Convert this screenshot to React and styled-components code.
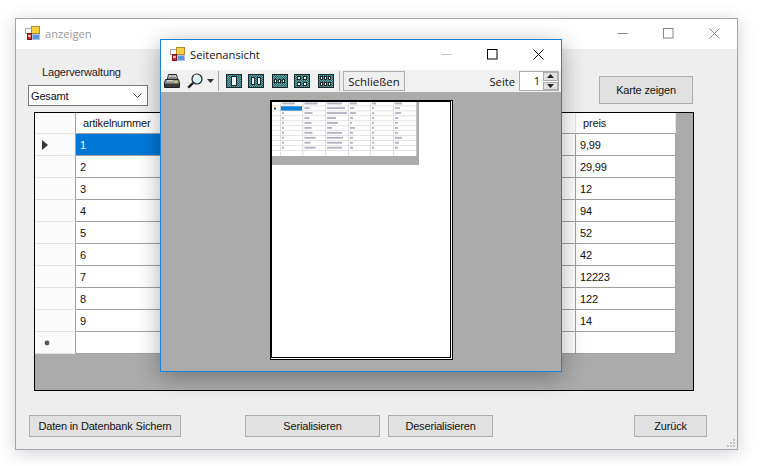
import React from "react";
import styled, { createGlobalStyle } from "styled-components";

const Global = createGlobalStyle`
  html, body { margin: 0; padding: 0; background: #fff; }
  body { font-family: "Liberation Sans", Arial, sans-serif; font-size: 11px; letter-spacing: -0.17px; color: #111; }
`;

const Desktop = styled.div`
  position: relative;
  width: 766px;
  height: 466px;
  overflow: hidden;
  background: #fff;
`;

const MainWindow = styled.div`
  position: absolute;
  left: 15px;
  top: 18px;
  width: 723px;
  height: 432px;
  box-sizing: border-box;
  border: 1px solid #a6a6a6;
  background: #eeeeee;
  box-shadow: 0 3px 16px rgba(40, 40, 70, 0.22);
  display: flex;
  flex-direction: column;
`;

const TitleBar = styled.div`
  height: 30px;
  box-sizing: border-box;
  padding: 0 0 2px 9px;
  flex: none;
  background: #fff;
  display: flex;
  align-items: center;
  font-family: "Open Sans", sans-serif;
  font-size: 11.2px;
  letter-spacing: 0;
  color: ${p => p.$active ? "#111" : "#9a9a9a"};
`;

const TitleText = styled.span`
  flex: 1;
  padding-left: 4px;
`;

const WinButton = styled.div`
  width: 46px;
  height: 100%;
  display: flex;
  align-items: center;
  justify-content: center;
`;

const TopRow = styled.div`
  display: flex;
  justify-content: space-between;
  align-items: flex-end;
  padding: 16px 44px 0 12px;
`;

const Field = styled.div`
  display: flex;
  flex-direction: column;
`;

const FieldLabel = styled.label`
  margin: 0 0 6px 14px;
  line-height: 14px;
  color: #222;
`;

const Select = styled.div`
  width: 120px;
  height: 21px;
  box-sizing: border-box;
  border: 1px solid #7a7a7a;
  background: #fff;
  display: flex;
  align-items: center;
  justify-content: space-between;
  padding: 0 5px 0 2px;
`;

const PushButton = styled.button`
  box-sizing: border-box;
  width: ${p => p.$w}px;
  height: ${p => p.$h || 22}px;
  margin: 0 0 ${p => p.$mb || 0}px ${p => p.$ml || 0}px;
  padding: 0;
  flex: none;
  white-space: nowrap;
  border: 1px solid #adadad;
  background: #e1e1e1;
  color: #111;
  font-family: "Liberation Sans", Arial, sans-serif;
  font-size: 11px;
  letter-spacing: -0.17px;
`;

const Grid = styled.div`
  margin: 6px 43px 0 18px;
  height: 279px;
  box-sizing: border-box;
  border: 1px solid #000;
  background: #ababab;
  display: flex;
  flex-direction: column;
`;

const GridRow = styled.div`
  display: grid;
  grid-template-columns: 41px repeat(6, 100px);
  height: ${p => p.$h}px;
`;

const RowHeader = styled.div`
  box-sizing: border-box;
  background: #fbfbfb;
  border-right: 1px solid #a0a0a0;
  border-bottom: 1px solid #e2e2e2;
  display: flex;
  align-items: center;
  padding-left: ${p => p.$indent || 0}px;
`;

const ColumnHeader = styled.div`
  box-sizing: border-box;
  background: #fff;
  border-right: 1px solid #e4e4e4;
  border-bottom: 1px solid #a0a0a0;
  padding-left: 7px;
  display: flex;
  align-items: center;
`;

const Cell = styled.div`
  box-sizing: border-box;
  background: ${p => p.$sel ? "#0078d7" : "#fff"};
  color: ${p => p.$sel ? "#fff" : "#111"};
  border-right: 1px solid #a0a0a0;
  border-bottom: 1px solid #a0a0a0;
  padding-left: 4px;
  display: flex;
  align-items: center;
`;

const Footer = styled.div`
  display: flex;
  padding-left: 13px;
  margin-top: 24px;
`;

const Grip = styled.svg`
  position: absolute;
  right: 1px;
  bottom: 1px;
`;

const Dialog = styled.div`
  position: absolute;
  left: 160px;
  top: 39px;
  width: 402px;
  height: 333px;
  box-sizing: border-box;
  border: 1px solid #1883d7;
  background: #ababab;
  box-shadow: 0 5px 22px rgba(0, 0, 0, 0.32);
  display: flex;
  flex-direction: column;
`;

const Toolbar = styled.div`
  height: 22px;
  flex: none;
  background: #f0f0f0;
  display: flex;
  align-items: center;
  padding-left: 3px;
`;

const ToolIcon = styled.svg`
  flex: none;
  margin-left: ${p => p.$ml || 0}px;
  display: block;
`;

const Sep = styled.div`
  width: 1px;
  height: 20px;
  flex: none;
  background: #a8a8a8;
  margin-left: ${p => p.$ml}px;
`;

const CloseButton = styled.button`
  box-sizing: border-box;
  width: 62px;
  height: 20px;
  margin-left: 3px;
  padding: 0;
  flex: none;
  border: 1px solid #adadad;
  background: #efefef;
  color: #111;
  font-family: "Open Sans", sans-serif;
  font-size: 11.4px;
`;

const PageLabel = styled.span`
  margin-left: auto;
  font-family: "Open Sans", sans-serif;
  font-size: 11.2px;
  letter-spacing: 0;
  color: #111;
`;

const Spin = styled.div`
  width: 40px;
  height: 20px;
  box-sizing: border-box;
  margin: 0 2px 0 4px;
  border: 1px solid #adadad;
  background: #fff;
  display: flex;
  justify-content: flex-end;
  align-items: stretch;
  font-family: "Open Sans", sans-serif;
  font-size: 11.2px;
`;

const SpinValue = styled.span`
  flex: 1;
  text-align: right;
  line-height: 18px;
  padding-right: 3px;
`;

const SpinArrows = styled.div`
  width: 15px;
  display: flex;
  flex-direction: column;
  gap: 1px;
  background: #fff;
`;

const SpinArrow = styled.div`
  flex: 1;
  background: #e1e1e1;
  border: 1px solid #adadad;
  box-sizing: border-box;
  display: flex;
  align-items: center;
  justify-content: center;
`;

const Preview = styled.div`
  flex: 1;
  display: flex;
  justify-content: center;
  padding-top: 8px;
  box-sizing: border-box;
`;

const Page = styled.div`
  width: 183px;
  height: 260px;
  box-sizing: border-box;
  border: 1px solid #000;
  padding: 0 1px 1px 0;
  background: #fff;
`;

const PageInner = styled.div`
  height: 100%;
  box-sizing: border-box;
  border: 1px solid #000;
  background: #fff;
  display: flex;
`;

const Thumb = styled.svg`
  display: block;
  flex: none;
`;

const AppIcon = () => (
  <svg width="16" height="16" viewBox="0 0 16 16" style={{ flex: "none" }} shapeRendering="crispEdges">
    <rect x="0.5" y="3.5" width="6" height="5" fill="#fff" stroke="#a9a9a9" />
    <rect x="6.5" y="1.5" width="8" height="7" fill="#f6cf3c" stroke="#b98a2a" />
    <rect x="2.5" y="8.5" width="4" height="6" fill="#c8302a" stroke="#7d1712" />
    <rect x="7.5" y="9.5" width="7" height="5" fill="#5b94e0" stroke="#a9c2e6" />
    <rect x="3" y="10" width="3" height="2" fill="#f4b4a8" />
  </svg>
);

const WinIcon = ({ kind, color }) => (
  <svg width="11" height="11" viewBox="0 0 11 11" fill="none" stroke={color} strokeWidth="1">
    {kind === "min" && <path d="M0.5 5.5H10.5" />}
    {kind === "max" && <rect x="0.5" y="0.5" width="9.5" height="9.5" />}
    {kind === "close" && <path d="M0.5 0.5L10.5 10.5M10.5 0.5L0.5 10.5" />}
  </svg>
);

const Printer = () => (
  <ToolIcon width="16" height="16" viewBox="0 0 16 16">
    <path d="M4.5 1.5H12.5L13.5 6H3.5Z" fill="#eeeeee" stroke="#222" />
    <path d="M5.5 3H11.5M5 4.5H12" stroke="#888" />
    <path d="M1.5 6.5H14.5L15.5 10V14.5H0.5V10Z" fill="#9c9c9c" stroke="#222" />
    <rect x="1" y="10.5" width="14" height="3.5" fill="#3c3c3c" />
    <rect x="10" y="8" width="3" height="1.5" fill="#f0d040" />
    <path d="M3 7.6H9" stroke="#dcdcdc" />
  </ToolIcon>
);

const Magnifier = () => (
  <ToolIcon $ml={7} width="16" height="16" viewBox="0 0 16 16">
    <circle cx="10" cy="6" r="5" fill="#d8f2fa" stroke="#222" strokeWidth="1.2" />
    <path d="M7 3.5A4 4 0 0 1 10 2.5" stroke="#fff" strokeWidth="1.4" fill="none" />
    <path d="M6.2 9.8L1.2 14.6" stroke="#222" strokeWidth="2.4" />
  </ToolIcon>
);

const Caret = () => (
  <ToolIcon $ml={4} width="7" height="4" viewBox="0 0 7 4">
    <path d="M0 0H7L3.5 4Z" fill="#333" />
  </ToolIcon>
);

const PageIcon = ({ panes, ml }) => (
  <ToolIcon $ml={ml} width="16" height="14" viewBox="0 0 16 14" shapeRendering="crispEdges">
    <defs>
      <pattern id="dither" width="2" height="2" patternUnits="userSpaceOnUse">
        <rect width="2" height="2" fill="#1f6a6c" />
        <rect width="1" height="1" fill="#6f9fa0" />
        <rect x="1" y="1" width="1" height="1" fill="#6f9fa0" />
      </pattern>
    </defs>
    <rect x="0.5" y="0.5" width="15" height="13" fill="url(#dither)" stroke="#17282a" />
    {panes.map(([x, y, w, h], i) => (
      <rect key={i} x={x + 0.5} y={y + 0.5} width={w} height={h} fill="#eef2f2" stroke="#17282a" />
    ))}
  </ToolIcon>
);

const icons = [
  { ml: 7, panes: [[5, 2, 5, 9]] },
  { ml: 6, panes: [[3, 3, 3, 7], [9, 3, 3, 7]] },
  { ml: 8, panes: [[2, 5, 2, 3], [6, 5, 2, 3], [10, 5, 2, 3]] },
  { ml: 6, panes: [[3, 2, 3, 3], [9, 2, 3, 3], [3, 8, 3, 3], [9, 8, 3, 3]] },
  { ml: 8, panes: [[2, 2, 2, 3], [6, 2, 2, 3], [10, 2, 2, 3], [2, 8, 2, 3], [6, 8, 2, 3], [10, 8, 2, 3]] },
];

const thumbCols = [8, 30.5, 53, 76, 98, 121, 144];
const thumbData = [
  [13, 13, 15, 7, 4, 7],
  [2, 5, 18, 4, 2, 5],
  [2, 8, 20, 6, 2, 6],
  [2, 5, 9, 3, 2, 3],
  [2, 7, 11, 2, 2, 3],
  [2, 7, 5, 5, 2, 3],
  [2, 8, 15, 3, 2, 3],
  [2, 11, 16, 3, 2, 7],
  [2, 6, 15, 3, 2, 4],
  [2, 11, 15, 3, 2, 3],
];

const Thumbnail = () => (
  <Thumb width="147" height="63" viewBox="0 0 147 63">
    <defs>
      <filter id="soft" x="-5%" y="-5%" width="110%" height="110%">
        <feGaussianBlur stdDeviation="0.45" />
      </filter>
    </defs>
    <rect width="147" height="63" fill="#ababab" />
    <rect x="0" y="0" width="144" height="54" fill="#fff" />
    <rect x="8.5" y="4" width="21.5" height="5" fill="#0c7fd8" />
    {thumbCols.map(x => <rect key={x} x={x} y="0" width="0.7" height="54" fill="#d2d2d2" />)}
    {Array.from({ length: 10 }, (_, i) => (
      <rect key={i} x="0" y={3.6 + i * 4.95} width="144" height="0.7" fill="#dadada" />
    ))}
    <g filter="url(#soft)">
      {thumbData.map((row, r) => row.map((w, c) => (
        (r === 1 && c === 0) ? null : (
          <rect key={`${r}-${c}`} x={thumbCols[c] + 2} y={(r === 0 ? 0.6 : 5.2 + (r - 1) * 4.95)} width={w} height="1.8" fill="#9c9cb4" opacity="0.8" />
        )
      )))}
    </g>
    <rect x="2" y="5.5" width="2" height="2" fill="#444" />
  </Thumb>
);

const prices = ["9,99", "29,99", "12", "94", "52", "42", "12223", "122", "14"];

const Arrow = () => (
  <svg width="6" height="10" viewBox="0 0 6 10"><path d="M0 0L6 5L0 10Z" fill="#333" /></svg>
);

const Star = () => (
  <svg width="6" height="6" viewBox="0 0 6 6"><circle cx="3" cy="3" r="2.4" fill="#555" /></svg>
);

export default function App() {
  return (
    <>
      <Global />
      <Desktop>
        <MainWindow>
          <TitleBar>
            <AppIcon />
            <TitleText>anzeigen</TitleText>
            <WinButton><WinIcon kind="min" color="#888" /></WinButton>
            <WinButton><WinIcon kind="max" color="#888" /></WinButton>
            <WinButton><WinIcon kind="close" color="#888" /></WinButton>
          </TitleBar>
          <TopRow>
            <Field>
              <FieldLabel>Lagerverwaltung</FieldLabel>
              <Select>
                Gesamt
                <svg width="9" height="5" viewBox="0 0 9 5" fill="none" stroke="#444"><path d="M0.5 0.5L4.5 4.5L8.5 0.5" /></svg>
              </Select>
            </Field>
            <PushButton $w={94} $h={28} $mb={2}>Karte zeigen</PushButton>
          </TopRow>
          <Grid>
            <GridRow $h={21}>
              <RowHeader />
              <ColumnHeader>artikelnummer</ColumnHeader>
              <ColumnHeader />
              <ColumnHeader />
              <ColumnHeader />
              <ColumnHeader />
              <ColumnHeader>preis</ColumnHeader>
            </GridRow>
            {prices.map((price, i) => (
              <GridRow $h={22} key={price}>
                <RowHeader $indent={7}>{i === 0 && <Arrow />}</RowHeader>
                <Cell $sel={i === 0}>{i + 1}</Cell>
                <Cell />
                <Cell />
                <Cell />
                <Cell />
                <Cell>{price}</Cell>
              </GridRow>
            ))}
            <GridRow $h={22}>
              <RowHeader $indent={9}><Star /></RowHeader>
              <Cell />
              <Cell />
              <Cell />
              <Cell />
              <Cell />
              <Cell />
            </GridRow>
          </Grid>
          <Footer>
            <PushButton $w={152}>Daten in Datenbank Sichern</PushButton>
            <PushButton $w={135} $ml={64}>Serialisieren</PushButton>
            <PushButton $w={105} $ml={8}>Deserialisieren</PushButton>
            <PushButton $w={73} $ml={141}>Zurück</PushButton>
          </Footer>
          <Grip width="9" height="9" viewBox="0 0 9 9" fill="#c4c4c4">
            <rect x="6" y="0" width="2" height="2" />
            <rect x="3" y="3" width="2" height="2" />
            <rect x="6" y="3" width="2" height="2" />
            <rect x="0" y="6" width="2" height="2" />
            <rect x="3" y="6" width="2" height="2" />
            <rect x="6" y="6" width="2" height="2" />
          </Grip>
        </MainWindow>
        <Dialog>
          <TitleBar $active>
            <AppIcon />
            <TitleText>Seitenansicht</TitleText>
            <WinButton><WinIcon kind="min" color="#c8c8c8" /></WinButton>
            <WinButton><WinIcon kind="max" color="#000" /></WinButton>
            <WinButton><WinIcon kind="close" color="#000" /></WinButton>
          </TitleBar>
          <Toolbar>
            <Printer />
            <Magnifier />
            <Caret />
            <Sep $ml={4} />
            {icons.map((ic, i) => <PageIcon key={i} ml={ic.ml} panes={ic.panes} />)}
            <Sep $ml={5} />
            <CloseButton>Schließen</CloseButton>
            <PageLabel>Seite</PageLabel>
            <Spin>
              <SpinValue>1</SpinValue>
              <SpinArrows>
                <SpinArrow><svg width="7" height="4" viewBox="0 0 7 4"><path d="M0 4H7L3.5 0Z" fill="#222" /></svg></SpinArrow>
                <SpinArrow><svg width="7" height="4" viewBox="0 0 7 4"><path d="M0 0H7L3.5 4Z" fill="#222" /></svg></SpinArrow>
              </SpinArrows>
            </Spin>
          </Toolbar>
          <Preview>
            <Page>
              <PageInner>
                <Thumbnail />
              </PageInner>
            </Page>
          </Preview>
        </Dialog>
      </Desktop>
    </>
  );
}
